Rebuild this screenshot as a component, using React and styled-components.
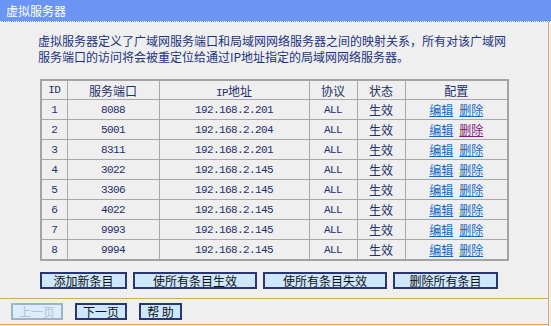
import React from "react";
import styled, { createGlobalStyle } from "styled-components";

const GlobalStyle = createGlobalStyle`
  html, body {
    margin: 0;
    padding: 0;
    background: #efefef;
  }
  body {
    font-family: "Noto Sans CJK SC", "DejaVu Sans", sans-serif;
    font-size: 12px;
  }
`;

const Page = styled.div`
  width: 551px;
  height: 326px;
  display: flex;
  flex-direction: column;
  background: #efefef;
  overflow: hidden;
`;

const TitleBar = styled.div`
  height: 21px;
  line-height: 21px;
  padding-left: 6px;
  background: #6b95f4;
  color: #ffffff;
  font-size: 12px;
  border-bottom: 1px dotted #ffffff;
`;

const Body = styled.div`
  width: 548px;
  flex: 1;
  display: flex;
  flex-direction: column;
  border-right: 1px solid #dba56a;
`;

const Content = styled.div`
  flex: 1;
  padding: 11px 0 0 38px;
`;

const Intro = styled.p`
  margin: 0;
  width: 470px;
  line-height: 16px;
  color: #1c3380;
`;

const Table = styled.table`
  margin: 14px 0 0 2px;
  width: 467px;
  table-layout: fixed;
  border-collapse: collapse;
  border: 2px solid #a3a3a3;
  color: #1f2f6b;
`;

const Cell = styled.td`
  height: 19px;
  padding: 0;
  border: 1px solid #a8a8a8;
  text-align: center;
  font-family: ${(p) => (p.$mono ? '"Liberation Mono", monospace' : 'inherit')};
  font-size: ${(p) => (p.$mono ? "11px" : "12px")};
  letter-spacing: ${(p) => (p.$mono ? "-0.6px" : "0")};
`;

const Head = styled(Cell).attrs({ as: "th" })`
  font-weight: normal;
  height: 18px;
`;

const Mono = styled.span`
  font-family: "Liberation Mono", monospace;
  font-size: 11px;
  letter-spacing: -0.6px;
`;

const Link = styled.a`
  color: ${(p) => (p.$visited ? "#7c1a7c" : "#1469c8")};
  text-decoration: underline;
  cursor: pointer;
  & + & {
    margin-left: 6px;
  }
`;

const Actions = styled.div`
  display: flex;
  gap: 6px;
  margin: 11px 0 0 2px;
`;

const Button = styled.button`
  width: ${(p) => p.$w}px;
  height: 17px;
  padding: 0;
  background: ${(p) => (p.disabled ? "#dcedfb" : "#cde7fc")};
  border: 2px solid ${(p) => (p.disabled ? "#9fb0cc" : "#2b3575")};
  color: ${(p) => (p.disabled ? "#b8c0cc" : "#111111")};
  font-family: "Noto Sans CJK SC", sans-serif;
  font-size: 12px;
  line-height: 13px;
  white-space: pre;
  box-sizing: border-box;
`;

const Footer = styled.div`
  height: 25px;
  display: flex;
  align-items: center;
  gap: 12px;
  padding-left: 11px;
  margin-bottom: 1px;
  border-top: 1px solid #dba56a;
  border-bottom: 1px solid #dba56a;
`;

const rules = [
  ["8088", "192.168.2.201"],
  ["5001", "192.168.2.204"],
  ["8311", "192.168.2.201"],
  ["3022", "192.168.2.145"],
  ["3306", "192.168.2.145"],
  ["4022", "192.168.2.145"],
  ["9993", "192.168.2.145"],
  ["9994", "192.168.2.145"],
];

const widths = [26, 92, 150, 48, 48, 103];

export default function App() {
  return (
    <Page>
      <GlobalStyle />
      <TitleBar>虚拟服务器</TitleBar>
      <Body>
        <Content>
          <Intro>
            虚拟服务器定义了广域网服务端口和局域网网络服务器之间的映射关系，所有对该广域网服务端口的访问将会被重定位给通过IP地址指定的局域网网络服务器。
          </Intro>
          <Table>
            <colgroup>
              {widths.map((w, i) => (
                <col key={i} style={{ width: w }} />
              ))}
            </colgroup>
            <thead>
              <tr>
                <Head $mono>ID</Head>
                <Head>服务端口</Head>
                <Head>
                  <Mono>IP</Mono>地址
                </Head>
                <Head>协议</Head>
                <Head>状态</Head>
                <Head>配置</Head>
              </tr>
            </thead>
            <tbody>
              {rules.map(([port, ip], i) => (
                <tr key={i}>
                  <Cell $mono>{i + 1}</Cell>
                  <Cell $mono>{port}</Cell>
                  <Cell $mono>{ip}</Cell>
                  <Cell $mono>ALL</Cell>
                  <Cell>生效</Cell>
                  <Cell>
                    <Link>编辑</Link>
                    <Link $visited={i === 1}>删除</Link>
                  </Cell>
                </tr>
              ))}
            </tbody>
          </Table>
          <Actions>
            <Button $w={87}>添加新条目</Button>
            <Button $w={124}>使所有条目生效</Button>
            <Button $w={124}>使所有条目失效</Button>
            <Button $w={105}>删除所有条目</Button>
          </Actions>
        </Content>
        <Footer>
          <Button $w={52} disabled>
            上一页
          </Button>
          <Button $w={52}>下一页</Button>
          <Button $w={43}>{"帮 助"}</Button>
        </Footer>
      </Body>
    </Page>
  );
}
